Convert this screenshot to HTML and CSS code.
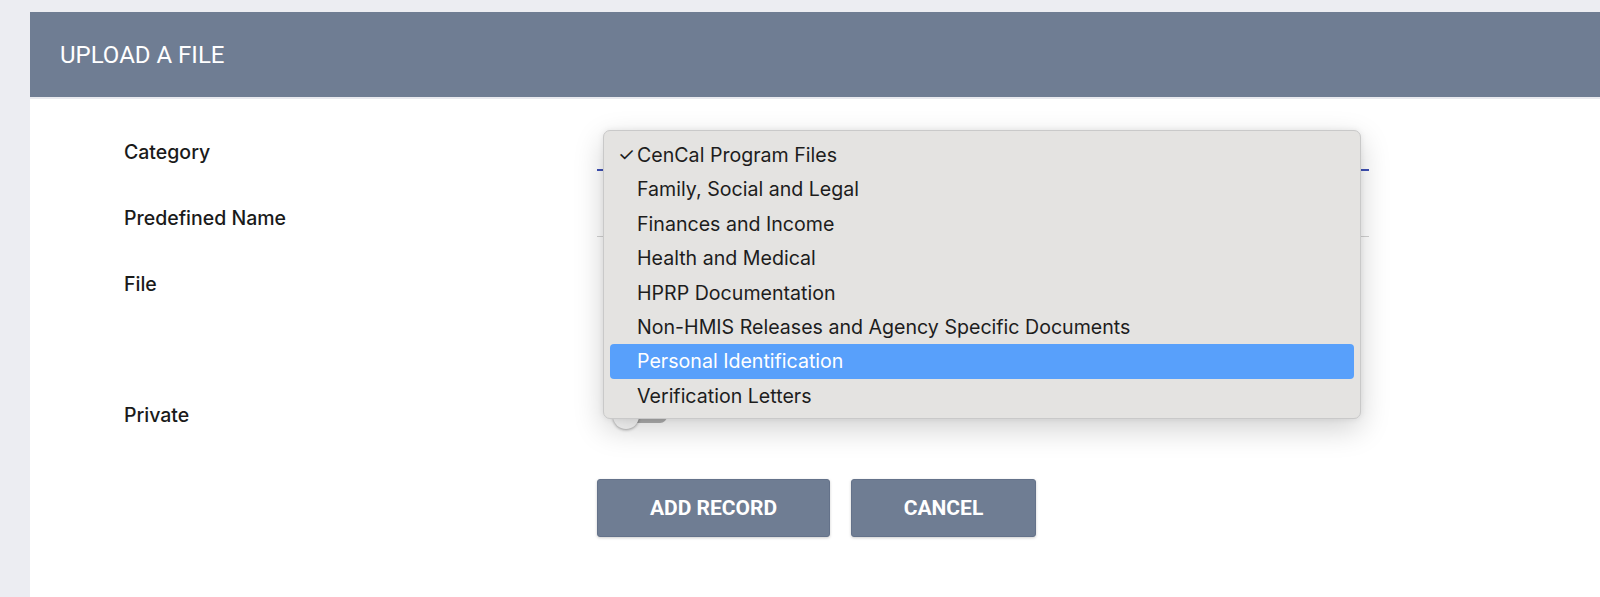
FILE: index.html
```html
<!DOCTYPE html>
<html lang="en">
<head>
<meta charset="utf-8">
<title>Upload a file</title>
<link rel="stylesheet" href="styles.css">
</head>
<body>
<div class="card">
  <div class="card-header">
    <h1 class="title">UPLOAD A FILE</h1>
  </div>
  <form class="form">
    <div class="row">
      <label class="label">Category</label>
      <div class="field">
        <div class="select focused"><span class="arrow"></span></div>
        <ul class="menu">
          <li class="option checked"><span class="check">✓</span>CenCal Program Files</li>
          <li class="option">Family, Social and Legal</li>
          <li class="option">Finances and Income</li>
          <li class="option">Health and Medical</li>
          <li class="option">HPRP Documentation</li>
          <li class="option">Non-HMIS Releases and Agency Specific Documents</li>
          <li class="option active">Personal Identification</li>
          <li class="option">Verification Letters</li>
        </ul>
      </div>
    </div>
    <div class="row">
      <label class="label">Predefined Name</label>
      <div class="field">
        <div class="select"><span class="arrow"></span></div>
      </div>
    </div>
    <div class="row row-file">
      <label class="label">File</label>
      <div class="field"></div>
    </div>
    <div class="row">
      <label class="label">Private</label>
      <div class="field field-toggle">
        <span class="toggle"><span class="track"></span><span class="thumb"></span></span>
      </div>
    </div>
    <div class="actions">
      <button type="button" class="btn btn-add">ADD RECORD</button>
      <button type="button" class="btn btn-cancel">CANCEL</button>
    </div>
  </form>
</div>
</body>
</html>
```
FILE: styles.css
```css
html, body {
  margin: 0;
  height: 100%;
}
body {
  background: #ecedf2;
  padding: 12px 0 0 30px;
  box-sizing: border-box;
  font-family: Roboto, "Liberation Sans", sans-serif;
  overflow: hidden;
}
.card {
  background: #fff;
  height: 100%;
}
.card-header {
  height: 85px;
  background: #6f7d93;
  border-bottom: 2px solid #e9eaef;
  display: flex;
  align-items: center;
  padding-left: 30px;
}
.title {
  margin: 0;
  color: #fff;
  font-weight: 400;
  font-size: 24px;
  letter-spacing: 0;
}
.form {
  padding: 20px 0 0 94px;
}
.row {
  display: grid;
  grid-template-columns: 473px 772px;
  height: 66px;
  align-items: start;
}
.row-file {
  height: 131px;
}
.label {
  line-height: 66px;
  font-family: Inter, Roboto, sans-serif;
  font-size: 19.5px;
  font-weight: 500;
  color: #1a1a1a;
}
.field {
  position: relative;
  height: 100%;
}
.select {
  position: relative;
  margin-top: 20px;
  height: 31px;
  border-bottom: 1px solid #d2d2d2;
}
.select.focused {
  height: 30px;
  border-bottom: 2px solid #3f51b5;
}
.arrow {
  position: absolute;
  right: 8px;
  top: 9px;
  border-left: 5px solid transparent;
  border-right: 5px solid transparent;
  border-top: 5px solid #6b6b6b;
}
.field-toggle {
  display: flex;
  align-items: center;
  padding-left: 16px;
}
.toggle {
  position: relative;
  width: 54px;
  height: 24px;
}
.track {
  position: absolute;
  left: 18px;
  top: 6px;
  width: 36px;
  height: 14px;
  border-radius: 7px;
  background: #b2b2b2;
}
.thumb {
  position: absolute;
  left: 0;
  top: 0;
  width: 26px;
  height: 26px;
  border-radius: 50%;
  background: #fafafa;
  box-shadow: 0 1px 3px rgba(0,0,0,0.35);
}
.menu {
  position: absolute;
  left: 6px;
  top: 11px;
  z-index: 5;
  width: 758px;
  box-sizing: border-box;
  margin: 0;
  padding: 7px 6px 5px;
  list-style: none;
  background: #e4e3e1;
  border: 1px solid #c9c9c9;
  border-radius: 7px;
  box-shadow: 0 10px 30px rgba(0,0,0,0.18), 0 0 6px rgba(0,0,0,0.08);
  font-family: Inter, "Noto Sans", sans-serif;
  font-size: 19.6px;
  color: #1d1d1d;
}
.option {
  position: relative;
  height: 34.4px;
  line-height: 34.4px;
  padding-left: 27px;
  border-radius: 4px;
}
.check {
  position: absolute;
  left: 8px;
  top: 0;
  font-size: 19px;
}
.option.active {
  background: #58a0fb;
  color: #fff;
}
.actions {
  display: flex;
  gap: 21px;
  margin: 31px 0 0 473px;
}
.btn {
  height: 58px;
  border: 1px solid #64728a;
  border-radius: 3px;
  background: #6f7d93;
  color: #fff;
  font-family: Roboto, "Liberation Sans", sans-serif;
  font-weight: 700;
  font-size: 21px;
  box-shadow: 0 1px 3px rgba(0,0,0,0.2);
  padding: 0;
}
.btn-add { width: 233px; }
.btn-cancel { width: 185px; }
```
